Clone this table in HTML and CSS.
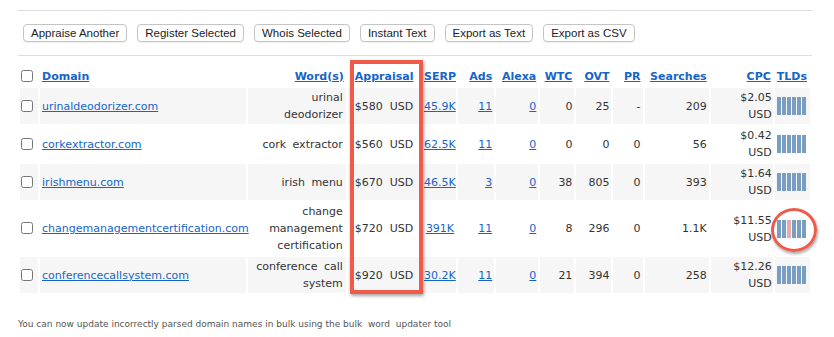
FILE: index.html
```html
<!DOCTYPE html>
<html lang="en">
<head>
    <meta charset="UTF-8">
    <title>Appraisal Results</title>
    <link rel="stylesheet" href="styles.css">
</head>
<body>
    <div class="page">
        <hr class="rule">
        <div class="button-group">
            <button>Appraise Another</button>
            <button>Register Selected</button>
            <button>Whois Selected</button>
            <button>Instant Text</button>
            <button>Export as Text</button>
            <button>Export as CSV</button>
        </div>
        <hr class="rule">

        <div class="table-wrap">
            <table class="results">
                <colgroup>
                    <col class="c-check">
                    <col class="c-domain">
                    <col class="c-words">
                    <col class="c-appr">
                    <col class="c-serp">
                    <col class="c-ads">
                    <col class="c-alexa">
                    <col class="c-wtc">
                    <col class="c-ovt">
                    <col class="c-pr">
                    <col class="c-search">
                    <col class="c-cpc">
                    <col class="c-tlds">
                </colgroup>
                <thead>
                    <tr>
                        <th class="chk"><input type="checkbox"></th>
                        <th class="left"><a href="#">Domain</a></th>
                        <th><a href="#">Word(s)</a></th>
                        <th class="left appr"><a href="#">Appraisal</a></th>
                        <th class="left"><a href="#">SERP</a></th>
                        <th><a href="#">Ads</a></th>
                        <th><a href="#">Alexa</a></th>
                        <th><a href="#">WTC</a></th>
                        <th><a href="#">OVT</a></th>
                        <th><a href="#">PR</a></th>
                        <th><a href="#">Searches</a></th>
                        <th><a href="#">CPC</a></th>
                        <th class="left"><a href="#">TLDs</a></th>
                    </tr>
                </thead>
                <tbody>
                    <tr class="odd">
                        <td class="chk"><input type="checkbox"></td>
                        <td class="left"><a href="#">urinaldeodorizer.com</a></td>
                        <td class="words">urinal deodorizer</td>
                        <td class="left appr">$580&nbsp; USD</td>
                        <td><a href="#">45.9K</a></td>
                        <td><a href="#">11</a></td>
                        <td><a href="#">0</a></td>
                        <td>0</td>
                        <td>25</td>
                        <td>-</td>
                        <td>209</td>
                        <td class="cpc">$2.05<br>USD</td>
                        <td class="left"><span class="tlds"><i></i><i></i><i></i><i></i><i></i><i></i></span></td>
                    </tr>
                    <tr>
                        <td class="chk"><input type="checkbox"></td>
                        <td class="left"><a href="#">corkextractor.com</a></td>
                        <td class="words">cork extractor</td>
                        <td class="left appr">$560&nbsp; USD</td>
                        <td><a href="#">62.5K</a></td>
                        <td><a href="#">11</a></td>
                        <td><a href="#">0</a></td>
                        <td>0</td>
                        <td>0</td>
                        <td>0</td>
                        <td>56</td>
                        <td class="cpc">$0.42<br>USD</td>
                        <td class="left"><span class="tlds"><i></i><i></i><i></i><i></i><i></i><i></i></span></td>
                    </tr>
                    <tr class="odd">
                        <td class="chk"><input type="checkbox"></td>
                        <td class="left"><a href="#">irishmenu.com</a></td>
                        <td class="words">irish menu</td>
                        <td class="left appr">$670&nbsp; USD</td>
                        <td><a href="#">46.5K</a></td>
                        <td><a href="#">3</a></td>
                        <td><a href="#">0</a></td>
                        <td>38</td>
                        <td>805</td>
                        <td>0</td>
                        <td>393</td>
                        <td class="cpc">$1.64<br>USD</td>
                        <td class="left"><span class="tlds"><i></i><i></i><i></i><i></i><i></i><i></i></span></td>
                    </tr>
                    <tr>
                        <td class="chk"><input type="checkbox"></td>
                        <td class="left"><a href="#">changemanagementcertification.com</a></td>
                        <td class="words">change management certification</td>
                        <td class="left appr">$720&nbsp; USD</td>
                        <td><a href="#">391K</a></td>
                        <td><a href="#">11</a></td>
                        <td><a href="#">0</a></td>
                        <td>8</td>
                        <td>296</td>
                        <td>0</td>
                        <td>1.1K</td>
                        <td class="cpc">$11.55<br>USD</td>
                        <td class="left tld-cell">
                            <span class="tlds"><i></i><i></i><i class="taken"></i><i></i><i></i><i></i></span>
                            <span class="circle"></span>
                        </td>
                    </tr>
                    <tr class="odd">
                        <td class="chk"><input type="checkbox"></td>
                        <td class="left"><a href="#">conferencecallsystem.com</a></td>
                        <td class="words">conference call system</td>
                        <td class="left appr">$920&nbsp; USD</td>
                        <td><a href="#">30.2K</a></td>
                        <td><a href="#">11</a></td>
                        <td><a href="#">0</a></td>
                        <td>21</td>
                        <td>394</td>
                        <td>0</td>
                        <td>258</td>
                        <td class="cpc">$12.26<br>USD</td>
                        <td class="left"><span class="tlds"><i></i><i></i><i></i><i></i><i></i><i></i></span></td>
                    </tr>
                </tbody>
            </table>
            <!-- highlight around the appraisal column -->
            <div class="appr-box"></div>
        </div>

        <p class="note">You can now update incorrectly parsed domain names in bulk using the bulk&nbsp; word&nbsp; updater tool</p>
    </div>
</body>
</html>
```

FILE: styles.css
```css
body {
    margin: 0;
    font-family: "DejaVu Sans", Verdana, sans-serif;
    font-size: 11px;
    color: #333;
    background-color: #fff;
}
.page {
    width: 794px;
    padding: 10px 0 0 18px;
}
.rule {
    border: none;
    border-top: 1px solid #ddd;
    margin: 0;
}
.button-group {
    display: flex;
    gap: 10px;
    padding: 13px 0 13px 5px;
}
button {
    font-family: "Liberation Sans", Arial, sans-serif;
    font-size: 11.5px;
    color: #222;
    background-color: #fff;
    border: 1px solid #c4c4c4;
    border-radius: 4px;
    height: 18px;
    padding: 0 7px;
    line-height: 16px;
    box-shadow: 0 1px 0 rgba(0, 0, 0, 0.05);
}
.table-wrap {
    position: relative;
    margin-top: 8px;
}
.results {
    border-collapse: separate;
    border-spacing: 2px;
    width: 794px;
    table-layout: fixed;
}
.c-check { width: 18px; }
.c-domain { width: 205px; }
.c-words { width: 98px; }
.c-appr { width: 72px; }
.c-serp { width: 34px; }
.c-ads { width: 36px; }
.c-alexa { width: 42px; }
.c-wtc { width: 34px; }
.c-ovt { width: 35px; }
.c-pr { width: 29px; }
.c-search { width: 64px; }
.c-cpc { width: 62px; }
.c-tlds { width: 35px; }
th, td {
    text-align: right;
    padding: 0 2px;
    white-space: nowrap;
}
th {
    font-weight: bold;
    height: 18px;
    padding-top: 1px;
    padding-bottom: 1px;
}
td {
    height: 34px;
    line-height: 17px;
}
.left {
    text-align: left;
}
a {
    color: #1565c8;
}
.results tr.odd td {
    background-color: #f6f6f6;
}
.chk {
    text-align: left;
    padding: 0 0 0 1px;
}
input[type="checkbox"] {
    margin: 0;
    width: 12px;
    height: 12px;
    vertical-align: -2px;
}
.words {
    white-space: normal;
    word-spacing: 3px;
    padding: 1px 3px 1px 2px;
}
.appr {
    padding-left: 7px;
}
.cpc {
    padding: 0 1px;
}
.tlds {
    display: inline-flex;
    gap: 1px;
    vertical-align: middle;
}
.tlds i {
    display: block;
    width: 4px;
    height: 18px;
    background-color: #7a9ec2;
}
.tlds i.taken {
    background-color: #eaa9aa;
}
.tld-cell {
    position: relative;
}
.circle {
    position: absolute;
    left: -4px;
    top: 6px;
    width: 40px;
    height: 38px;
    border: 3px solid #f05a4a;
    border-radius: 50%;
    box-shadow: 1px 2px 3px rgba(0, 0, 0, 0.35);
}
.appr-box {
    position: absolute;
    left: 332px;
    top: -4px;
    width: 65px;
    height: 226px;
    border: 4px solid #f05a4a;
    box-shadow: 1px 2px 3px rgba(0, 0, 0, 0.35);
    pointer-events: none;
}
.note {
    font-size: 9px;
    color: #555;
    margin: 24px 0 0 0;
}
```
